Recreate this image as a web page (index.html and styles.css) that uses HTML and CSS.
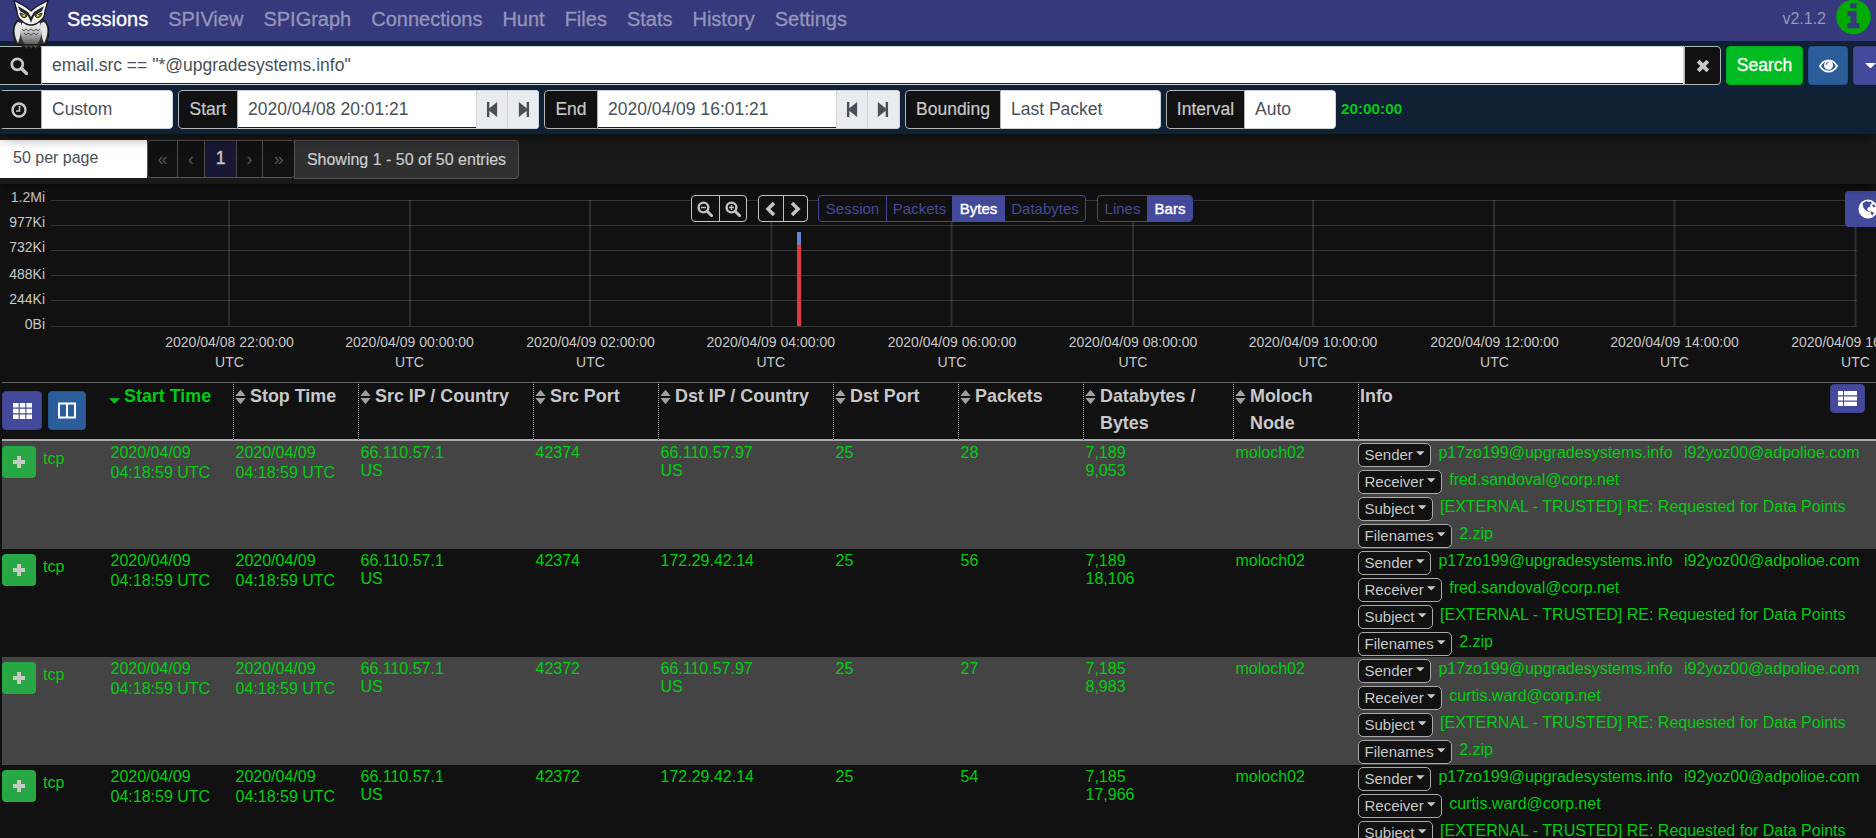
FILE: index.html
```html
<!DOCTYPE html>
<html lang="en">
<head>
<meta charset="utf-8">
<title>Sessions</title>
<link rel="stylesheet" href="styles.css">
</head>
<body>
<svg class="defs" width="0" height="0" aria-hidden="true">
  <symbol id="i-sort" viewBox="0 0 12 16"><path d="M6 0l5.600 7H.4zM6 16L.4 9h11.200z"/></symbol>
  <symbol id="i-plus" viewBox="0 0 14 14"><path d="M5 1h4v4h4v4H9v4H5V9H1V5h4z"/></symbol>
  <symbol id="i-caret" viewBox="0 0 10 5"><path d="M0 0h10L5 5z"/></symbol>
  <symbol id="i-back" viewBox="0 0 14 18"><path d="M1 1h2.600v6.600L12 1v16L3.600 10.400V17H1z"/></symbol>
  <symbol id="i-search" viewBox="0 0 18 18"><circle cx="7.300" cy="7.300" r="5.500" fill="none" stroke="currentColor" stroke-width="2.700"/><path d="M11.500 11.500l5 5" stroke="currentColor" stroke-width="3.200" stroke-linecap="round"/></symbol>
</svg>

<nav class="navbar">
  <svg class="owl" viewBox="0 0 40 52">
    <defs><linearGradient id="belly" x1="0" y1="0" x2="0" y2="1"><stop offset="0" stop-color="#fff"/><stop offset=".35" stop-color="#d8d8d8"/><stop offset="1" stop-color="#606060"/></linearGradient></defs>
    <path d="M12 43l-1 4 3-1 1 3 3-3 2 3 2-3 3 3 1-3 3 1-1-4z" fill="#555" stroke="#1c1c1c"/>
    <path d="M7 20C1 24 1 36 5 44l6 1h18l6-1c4-8 4-20-2-24l-6-2H13z" fill="#333" stroke="#111"/>
    <path d="M7 22c-5 4-4 14 0 21 2-5 4-13 3-20zM33 22c5 4 4 14 0 21-2-5-4-13-3-20z" fill="#e4e4e4"/>
    <path d="M11 23c5-3 13-3 18 0 3 8 1 17-3 21H14c-4-4-6-13-3-21z" fill="url(#belly)"/>
    <path d="M3 0c1 4 2 8 3 11 0 5 2 8 5 10 3 3 6 4 9 4s6-1 9-4c3-2 5-5 5-10 1-3 2-7 3-11-4 3-9 5-12 7l-5 4-5-4C12 5 7 3 3 0z" fill="#f2f2f2" stroke="#161616" stroke-width="1.300"/>
    <path d="M7 6l10 6 3 5 3-5 10-6-2 5-8 5-3 6-3-6-8-5z" fill="#292929"/>
    <path d="M9 13l7 3c-2 3-6 2-7-3zM31 13l-7 3c2 3 6 2 7-3z" fill="#887d0b" stroke="#222"/>
    <circle cx="13" cy="15.500" r="1.100" fill="#e7dd1b"/><circle cx="27" cy="15.500" r="1.100" fill="#e7dd1b"/>
    <path d="M18.500 17h3L20 23z" fill="#222"/>
    <path d="M11 29l2 2 2-2 2 2 3-2 3 2 2-2 2 2 2-2M13 33l2 2 2-2 3 2 3-2 2 2 2-2" fill="none" stroke="#555"/>
  </svg>
  <a class="nav-link active">Sessions</a><a class="nav-link">SPIView</a><a class="nav-link">SPIGraph</a><a class="nav-link">Connections</a><a class="nav-link">Hunt</a><a class="nav-link">Files</a><a class="nav-link">Stats</a><a class="nav-link">History</a><a class="nav-link">Settings</a>
  <span class="version">v2.1.2</span>
  <svg class="info-icon" viewBox="0 0 35 35"><circle cx="17.500" cy="17" r="17.300" fill="#00aa00"/><path d="M14.300 3.300h6.200v5h-6.200zM11.500 11.300h9v12h3v5h-12v-5h3v-7h-3z" fill="#36397b"/></svg>
</nav>

<section class="search-area">
  <div class="search-row">
    <span class="addon icon-addon"><svg class="ic18"><use href="#i-search"/></svg></span>
    <div class="field expression">email.src == "*@upgradesystems.info"</div>
    <span class="addon clear"><svg width="14" height="14" viewBox="0 0 14 14"><path d="M2.200 2.200l9.600 9.600M11.800 2.200l-9.600 9.600" stroke="currentColor" stroke-width="4"/></svg></span>
    <button class="btn btn-search">Search</button>
    <button class="btn btn-eye"><svg width="19" height="14" viewBox="0 0 19 14"><path d="M1 7C5-.5 14-.5 18 7 14 14.500 5 14.500 1 7z" fill="none" stroke="#fff" stroke-width="1.700"/><circle cx="9.500" cy="6.200" r="4.500" fill="#fff"/><path d="M7 6a2.500 2.500 0 0 1 2.500-2.500" fill="none" stroke="#2c5d9b"/></svg></button>
    <button class="btn btn-menu"><svg class="menu-caret"><use href="#i-caret"/></svg></button>
  </div>
  <div class="time-row">
    <div class="group g-range"><span class="addon icon-addon"><svg class="ic16" viewBox="0 0 16 16"><circle cx="8" cy="8" r="6.500" fill="none" stroke="currentColor" stroke-width="2.400"/><path d="M8.500 4v5H5" fill="none" stroke="currentColor" stroke-width="1.600"/></svg></span><div class="field">Custom</div></div>
    <div class="group g-start"><span class="addon">Start</span><div class="field underlined">2020/04/08 20:01:21</div><span class="step"><svg><use href="#i-back"/></svg></span><span class="step"><svg class="flip"><use href="#i-back"/></svg></span></div>
    <div class="group g-end"><span class="addon">End</span><div class="field underlined">2020/04/09 16:01:21</div><span class="step"><svg><use href="#i-back"/></svg></span><span class="step last"><svg class="flip"><use href="#i-back"/></svg></span></div>
    <div class="group g-bound"><span class="addon">Bounding</span><div class="field">Last Packet</div></div>
    <div class="group g-interval"><span class="addon">Interval</span><div class="field">Auto</div></div>
    <strong class="duration">20:00:00</strong>
  </div>
</section>

<section class="paging">
  <div class="per-page">50 per page</div>
  <div class="pages"><span class="pg w1">«</span><span class="pg w2">‹</span><span class="pg w3 current">1</span><span class="pg w4">›</span><span class="pg w5">»</span></div>
  <div class="showing">Showing 1 - 50 of 50 entries</div>
</section>

<section class="chart">
  <svg class="plot" viewBox="0 184 1876 198">
    <g class="grid-h"><path d="M51 200.500H1856M51 225.500H1857M51 250.500H1857M51 275.500H1857M51 300.500H1857M51 326.500H1857"/></g>
    <g class="grid-v"><path d="M229 200V326M410 200V326M590 200V326M771.500 200V326M951.500 200V326M1133 200V326M1313 200V326M1494 200V326M1674.500 200V326M1855.500 200V326"/></g>
    <rect x="797" y="232" width="4" height="13" fill="#5f87d6"/><rect x="797" y="244.700" width="4" height="81.300" fill="#dd3a3e"/>
    <g class="y-labels"><text x="45" y="202">1.2Mi</text><text x="45" y="227">977Ki</text><text x="45" y="252">732Ki</text><text x="45" y="279">488Ki</text><text x="45" y="304">244Ki</text><text x="45" y="329">0Bi</text></g>
    <g class="x-labels">
      <text x="229.500" y="347">2020/04/08 22:00:00</text><text x="229.500" y="367">UTC</text>
      <text x="409.500" y="347">2020/04/09 00:00:00</text><text x="409.500" y="367">UTC</text>
      <text x="590.500" y="347">2020/04/09 02:00:00</text><text x="590.500" y="367">UTC</text>
      <text x="770.800" y="347">2020/04/09 04:00:00</text><text x="770.800" y="367">UTC</text>
      <text x="952" y="347">2020/04/09 06:00:00</text><text x="952" y="367">UTC</text>
      <text x="1133" y="347">2020/04/09 08:00:00</text><text x="1133" y="367">UTC</text>
      <text x="1313" y="347">2020/04/09 10:00:00</text><text x="1313" y="367">UTC</text>
      <text x="1494.500" y="347">2020/04/09 12:00:00</text><text x="1494.500" y="367">UTC</text>
      <text x="1674.500" y="347">2020/04/09 14:00:00</text><text x="1674.500" y="367">UTC</text>
      <text x="1855.500" y="347">2020/04/09 16:00:00</text><text x="1855.500" y="367">UTC</text>
    </g>
  </svg>
  <div class="controls">
    <div class="cg light zoomers"><span><svg width="16" height="16" viewBox="0 0 18 18"><use href="#i-search"/><path d="M4.500 7.300h5.600" stroke="currentColor" stroke-width="1.500"/></svg></span><span><svg width="16" height="16" viewBox="0 0 18 18"><use href="#i-search"/><path d="M4.500 7.300h5.600M7.300 4.500v5.600" stroke="currentColor" stroke-width="1.500"/></svg></span></div>
    <div class="cg light panners"><span><svg width="11" height="14" viewBox="0 0 11 14"><path d="M9 1L3 7l6 6" fill="none" stroke="currentColor" stroke-width="3.500"/></svg></span><span><svg width="11" height="14" viewBox="0 0 11 14"><path d="M2 1l6 6-6 6" fill="none" stroke="currentColor" stroke-width="3.500"/></svg></span></div>
    <div class="cg blue types"><span class="t1">Session</span><span class="t2">Packets</span><span class="t3 on">Bytes</span><span class="t4">Databytes</span></div>
    <div class="cg blue style"><span>Lines</span><span class="on">Bars</span></div>
  </div>
  <button class="map-btn"><svg width="20" height="20" viewBox="0 0 20 20"><circle cx="10" cy="10" r="9.500" fill="#fff"/><path d="M4.500 4.500l4-2.500 2 1 2-.5 1.500 1.500-2 2 .5 1.500-2.500 1-1 2 1.500 1.500 2 .5.500 1-1.500-.5-3-1-3-3zM13 12.500l3 1-1.500 3-1.500-1.500zM14 6l2.500-.5 1 2-2 1z" fill="#444a9b"/></svg></button>
</section>

<table class="sessions">
  <colgroup><col class="c-act"><col class="c-125"><col class="c-125"><col class="c-175"><col class="c-125"><col class="c-175"><col class="c-125"><col class="c-125"><col class="c-150"><col class="c-125"><col></colgroup>
  <thead><tr>
    <th><div class="head-btns"><button class="hb hb-grid"><svg width="19" height="16" viewBox="0 0 19 16"><path d="M0 0h5.600v4.600H0zM6.700 0h5.600v4.600H6.700zM13.400 0H19v4.600h-5.600zM0 5.700h5.600v4.600H0zM6.700 5.700h5.600v4.600H6.700zM13.400 5.700H19v4.600h-5.600zM0 11.400h5.600V16H0zM6.700 11.400h5.600V16H6.700zM13.400 11.400H19V16h-5.600z" fill="#fff"/></svg></button><button class="hb hb-cols"><svg width="18" height="17" viewBox="0 0 18 17"><path d="M1 1.500h16v14H1zM9 1v15" fill="none" stroke="#fff" stroke-width="2"/></svg></button></div></th>
    <th class="sorted"><div class="h"><svg class="down"><use href="#i-caret"/></svg><span>Start Time</span></div></th>
    <th class="d"><div class="h"><svg class="sort"><use href="#i-sort"/></svg><span>Stop Time</span></div></th>
    <th class="d"><div class="h"><svg class="sort"><use href="#i-sort"/></svg><span>Src IP / Country</span></div></th>
    <th class="d"><div class="h"><svg class="sort"><use href="#i-sort"/></svg><span>Src Port</span></div></th>
    <th class="d"><div class="h"><svg class="sort"><use href="#i-sort"/></svg><span>Dst IP / Country</span></div></th>
    <th class="d"><div class="h"><svg class="sort"><use href="#i-sort"/></svg><span>Dst Port</span></div></th>
    <th class="d"><div class="h"><svg class="sort"><use href="#i-sort"/></svg><span>Packets</span></div></th>
    <th class="d"><div class="h"><svg class="sort"><use href="#i-sort"/></svg><span>Databytes / Bytes</span></div></th>
    <th class="d"><div class="h"><svg class="sort"><use href="#i-sort"/></svg><span>Moloch Node</span></div></th>
    <th class="d"><div class="h info-h"><span>Info</span><button class="list-btn"><svg width="19" height="15" viewBox="0 0 19 15"><path d="M0 0h5v4.200H0zM6 0h13v4.200H6zM0 5.400h5v4.200H0zM6 5.400h13v4.200H6zM0 10.800h5V15H0zM6 10.800h13V15H6z" fill="#fff"/></svg></button></div></th>
  </tr></thead>
  <tbody>
    <tr>
      <td><div class="act"><button class="plus"><svg><use href="#i-plus"/></svg></button><span>tcp</span></div></td>
      <td class="time">2020/04/09<br>04:18:59 UTC</td><td class="time">2020/04/09<br>04:18:59 UTC</td><td>66.110.57.1<br>US</td><td>42374</td><td>66.110.57.97<br>US</td><td>25</td><td>28</td><td>7,189<br>9,053</td><td>moloch02</td>
      <td class="info"><div class="lines">
        <div class="line"><span class="tag">Sender<svg><use href="#i-caret"/></svg></span><span class="val">p17zo199@upgradesystems.info</span><span class="val">i92yoz00@adpolioe.com</span></div>
        <div class="line"><span class="tag">Receiver<svg><use href="#i-caret"/></svg></span><span class="val">fred.sandoval@corp.net</span></div>
        <div class="line"><span class="tag">Subject<svg><use href="#i-caret"/></svg></span><span class="val">[EXTERNAL - TRUSTED] RE: Requested for Data Points</span></div>
        <div class="line"><span class="tag">Filenames<svg><use href="#i-caret"/></svg></span><span class="val">2.zip</span></div>
      </div></td>
    </tr>
    <tr>
      <td><div class="act"><button class="plus"><svg><use href="#i-plus"/></svg></button><span>tcp</span></div></td>
      <td class="time">2020/04/09<br>04:18:59 UTC</td><td class="time">2020/04/09<br>04:18:59 UTC</td><td>66.110.57.1<br>US</td><td>42374</td><td>172.29.42.14</td><td>25</td><td>56</td><td>7,189<br>18,106</td><td>moloch02</td>
      <td class="info"><div class="lines">
        <div class="line"><span class="tag">Sender<svg><use href="#i-caret"/></svg></span><span class="val">p17zo199@upgradesystems.info</span><span class="val">i92yoz00@adpolioe.com</span></div>
        <div class="line"><span class="tag">Receiver<svg><use href="#i-caret"/></svg></span><span class="val">fred.sandoval@corp.net</span></div>
        <div class="line"><span class="tag">Subject<svg><use href="#i-caret"/></svg></span><span class="val">[EXTERNAL - TRUSTED] RE: Requested for Data Points</span></div>
        <div class="line"><span class="tag">Filenames<svg><use href="#i-caret"/></svg></span><span class="val">2.zip</span></div>
      </div></td>
    </tr>
    <tr>
      <td><div class="act"><button class="plus"><svg><use href="#i-plus"/></svg></button><span>tcp</span></div></td>
      <td class="time">2020/04/09<br>04:18:59 UTC</td><td class="time">2020/04/09<br>04:18:59 UTC</td><td>66.110.57.1<br>US</td><td>42372</td><td>66.110.57.97<br>US</td><td>25</td><td>27</td><td>7,185<br>8,983</td><td>moloch02</td>
      <td class="info"><div class="lines">
        <div class="line"><span class="tag">Sender<svg><use href="#i-caret"/></svg></span><span class="val">p17zo199@upgradesystems.info</span><span class="val">i92yoz00@adpolioe.com</span></div>
        <div class="line"><span class="tag">Receiver<svg><use href="#i-caret"/></svg></span><span class="val">curtis.ward@corp.net</span></div>
        <div class="line"><span class="tag">Subject<svg><use href="#i-caret"/></svg></span><span class="val">[EXTERNAL - TRUSTED] RE: Requested for Data Points</span></div>
        <div class="line"><span class="tag">Filenames<svg><use href="#i-caret"/></svg></span><span class="val">2.zip</span></div>
      </div></td>
    </tr>
    <tr>
      <td><div class="act"><button class="plus"><svg><use href="#i-plus"/></svg></button><span>tcp</span></div></td>
      <td class="time">2020/04/09<br>04:18:59 UTC</td><td class="time">2020/04/09<br>04:18:59 UTC</td><td>66.110.57.1<br>US</td><td>42372</td><td>172.29.42.14</td><td>25</td><td>54</td><td>7,185<br>17,966</td><td>moloch02</td>
      <td class="info"><div class="lines">
        <div class="line"><span class="tag">Sender<svg><use href="#i-caret"/></svg></span><span class="val">p17zo199@upgradesystems.info</span><span class="val">i92yoz00@adpolioe.com</span></div>
        <div class="line"><span class="tag">Receiver<svg><use href="#i-caret"/></svg></span><span class="val">curtis.ward@corp.net</span></div>
        <div class="line"><span class="tag">Subject<svg><use href="#i-caret"/></svg></span><span class="val">[EXTERNAL - TRUSTED] RE: Requested for Data Points</span></div>
      </div></td>
    </tr>
  </tbody>
</table>
</body>
</html>
```

FILE: styles.css
```css
* { box-sizing: border-box; }
html, body { margin: 0; height: 838px; overflow: hidden; }
body { background: #111; color: #c8c8c8; font-family: "Liberation Sans", Arial, sans-serif; font-size: 16px; }
svg { display: block; fill: currentColor; flex: none; }
.defs { position: absolute; }
button { font: inherit; padding: 0; margin: 0; border: 0; display: flex; align-items: center; justify-content: center; flex: none; }

.navbar { height: 41px; background: #36397b; display: flex; align-items: center; padding: 0 5px 3px 11px; position: relative; z-index: 3; }
.owl { width: 40px; height: 52px; align-self: flex-start; margin-right: 6px; }
.nav-link { color: #9496bd; font-size: 20px; padding: 0 10px; line-height: 24px; -webkit-text-stroke: .3px; }
.nav-link.active { color: #fff; }
.version { margin-left: auto; color: #9597bd; font-size: 16px; }
.info-icon { width: 35px; height: 35px; margin-left: 10px; align-self: flex-start; }

.search-area { height: 93px; background: #102136; padding-top: 5px; position: relative; z-index: 2; box-shadow: 0 0 16px -2px #000; display: flex; flex-direction: column; gap: 5px; overflow-x: clip; }
.search-row { display: flex; height: 39px; }
.time-row { display: flex; height: 39px; gap: 5px; align-items: stretch; }
.addon { background: #111; border: 1px solid #b5b5b5; color: #c8c8c8; font-size: 17.5px; display: flex; align-items: center; justify-content: center; flex: none; -webkit-text-stroke: .2px; }
.icon-addon { width: 42px; border-left: 0; padding-right: 3px; }
.ic18 { width: 18px; height: 18px; }
.ic16 { width: 16px; height: 16px; }
.field { flex: 1; background: #fff; color: #495057; border: 1px solid #ced4da; border-left-width: 0; padding: 0 0 1px 10px; font-size: 17.5px; display: flex; align-items: center; white-space: nowrap; }
.expression, .underlined { box-shadow: inset 0 -1px #102136; }
.clear { width: 37px; border-radius: 0 4px 4px 0; margin-right: 5px; }
.btn { height: 39px; border-radius: 4px; }
.btn-search { width: 77px; background: #00bc22; border: 1px solid #00a51e; color: #fff; font-size: 17.5px; -webkit-text-stroke: .3px; padding-bottom: 1px; margin-right: 5px; }
.btn-eye { width: 40px; background: #2c5d9b; border: 1px solid #27538c; margin-right: 5px; }
.btn-menu { width: 23px; background: #444a9b; border: 1px solid #3b4188; border-right: 0; border-radius: 4px 0 0 4px; color: #fff; padding-left: 10px; }
.menu-caret { width: 11px; height: 5.500px; }
.group { display: flex; flex: none; border-radius: 4px; overflow: hidden; }
.group .field:last-child { border-radius: 0 4px 4px 0; }
.g-range { width: 173px; }
.g-start { width: 361px; }
.g-end { width: 356px; }
.g-bound { width: 256px; }
.g-interval { width: 170px; }
.group:not(.g-range) .addon { border-radius: 4px 0 0 4px; padding-bottom: 1px; }
.g-start .addon { width: 60px; }
.g-end .addon { width: 54px; }
.g-bound .addon { width: 96px; }
.g-interval .addon { width: 79px; }
.step { width: 31px; flex: none; background: #e9ecef; border: 1px solid #ced4da; border-left-width: 0; display: flex; align-items: center; justify-content: center; color: #495057; }
.step.last { width: 32px; padding-right: 3px; }
.step svg { width: 13px; height: 17px; }
.flip { transform: scaleX(-1); }
.duration { color: #00c815; font-size: 15.300px; align-self: center; padding-bottom: 1px; }

.paging { height: 50px; background: #191919; display: flex; padding-top: 6px; position: relative; z-index: 1; box-shadow: 0 0 14px -2px #000; }
.per-page { width: 147px; height: 38px; background: #fff; color: #495057; padding: 0 0 2px 13px; display: flex; align-items: center; font-size: 16px; }
.pages { display: flex; height: 38px; border: 1px solid #555; border-radius: 4px; overflow: hidden; }
.pg { display: flex; align-items: center; justify-content: center; color: #555; font-size: 17.5px; border-right: 1px solid #4c4c4c; background: #111; }
.pg:last-child { border-right: 0; }
.w1 { width: 30px; } .w2 { width: 27px; } .w3 { width: 32px; } .w4 { width: 26px; } .w5 { width: 31px; }
.current { background: #181834; color: #c8c8c8; -webkit-text-stroke: .4px; padding-bottom: 1px; }
.showing { width: 225px; height: 39px; margin-left: -1px; background: #303030; border: 1px solid #555; border-radius: 0 4px 4px 0; color: #ccc; display: flex; align-items: center; justify-content: center; font-size: 16px; white-space: nowrap; -webkit-text-stroke: .2px; }

.chart { height: 198px; position: relative; overflow: hidden; }
.plot { width: 1876px; height: 198px; }
.grid-h path { stroke: #353535; fill: none; }
.grid-v path { stroke: #fff; stroke-opacity: .12; stroke-width: 2; fill: none; }
.y-labels text { text-anchor: end; font-size: 14px; fill: #c8c8c8; }
.x-labels text { text-anchor: middle; font-size: 14px; fill: #c8c8c8; }
.controls { position: absolute; left: 691px; top: 11px; display: flex; }
.cg { display: flex; height: 27px; border: 1px solid; border-radius: 4px; overflow: hidden; background: #111; }
.cg span { display: flex; align-items: center; justify-content: center; border-right: 1px solid; flex: 1 0 auto; font-size: 15px; }
.cg span:last-child { border-right: 0; }
.light { color: #c4c4c4; }
.zoomers { width: 56px; margin-right: 11px; }
.panners { width: 50px; margin-right: 10px; }
.blue { color: #444a9b; }
.types { width: 268px; margin-right: 11px; }
.types span { flex: none; }
.t1 { width: 68px; } .t2 { width: 66px; } .t3 { width: 52px; } .t4 { width: 80px; }
.style { width: 96px; }
.blue .on { background: #444a9b; color: #fff; border-color: #444a9b; -webkit-text-stroke: .4px; }
.map-btn { position: absolute; right: 0; top: 7px; width: 31px; height: 36px; background: #444a9b; border-radius: 4px 0 0 4px; padding-left: 13px; justify-content: flex-start; }

.sessions { width: 1874px; margin-left: 2px; table-layout: fixed; border-collapse: separate; border-spacing: 0; }
.c-act { width: 106px; } .c-125 { width: 125px; } .c-150 { width: 150px; } .c-175 { width: 175px; }
th { height: 59px; padding: 0 0 0 1px; border-top: 1px solid #666; border-bottom: 2px solid #aaa; vertical-align: top; text-align: left; font-size: 17.900px; line-height: 27px; color: #c8c8c8; }
th.d { border-left: 1px dotted #aaa; }
th:first-child { padding: 0; }
.h { display: flex; }
.h span { padding-right: 12px; }
.sort { width: 11px; height: 16px; margin: 6px 4px 0 0; color: #a0a0a0; }
.down { width: 11px; height: 6px; margin: 15px 4px 0 0; }
.sorted { color: #00c815; }
.sorted .h span { padding: 0; }
.info-h { justify-content: space-between; }
.head-btns { display: flex; gap: 6px; padding-top: 8px; }
.hb { height: 39px; border-radius: 4px; }
.hb-grid { width: 40px; background: #444a9b; border: 1px solid #3b4188; }
.hb-cols { width: 38px; background: #2c5d9b; border: 1px solid #27538c; }
.list-btn { width: 35px; height: 29px; background: #444a9b; border: 1px solid #3b4188; border-radius: 4px; margin: 1px 11px 0 0; }
td { height: 108px; padding: 3px 0 0 2.500px; vertical-align: top; color: #00cc11; line-height: 18px; }
td:first-child { padding: 5px 0 0; }
td.time { line-height: 20px; padding-top: 2px; }
tbody tr:nth-child(odd) td { background: #444; }
.act { display: flex; gap: 7px; }
.plus { width: 34px; height: 32px; background: #28a745; border-radius: 4px; color: #c8c8c8; }
.plus svg { width: 14px; height: 14px; }
.act span { padding-top: 4px; }
td.info { padding: 2px 0 0; }
.lines { height: 106px; }
.line { display: flex; height: 27px; }
.tag { height: 24px; display: flex; align-items: center; border: 1px solid #aaa; border-radius: 5px; background: #111; color: #c8c8c8; font-size: 15px; padding: 0 5.500px; margin-right: 7px; }
.tag svg { width: 8.500px; height: 4.500px; margin: -3px 0 0 3.500px; }
.val { margin-right: 11.500px; white-space: nowrap; padding-top: 1px; }
```
